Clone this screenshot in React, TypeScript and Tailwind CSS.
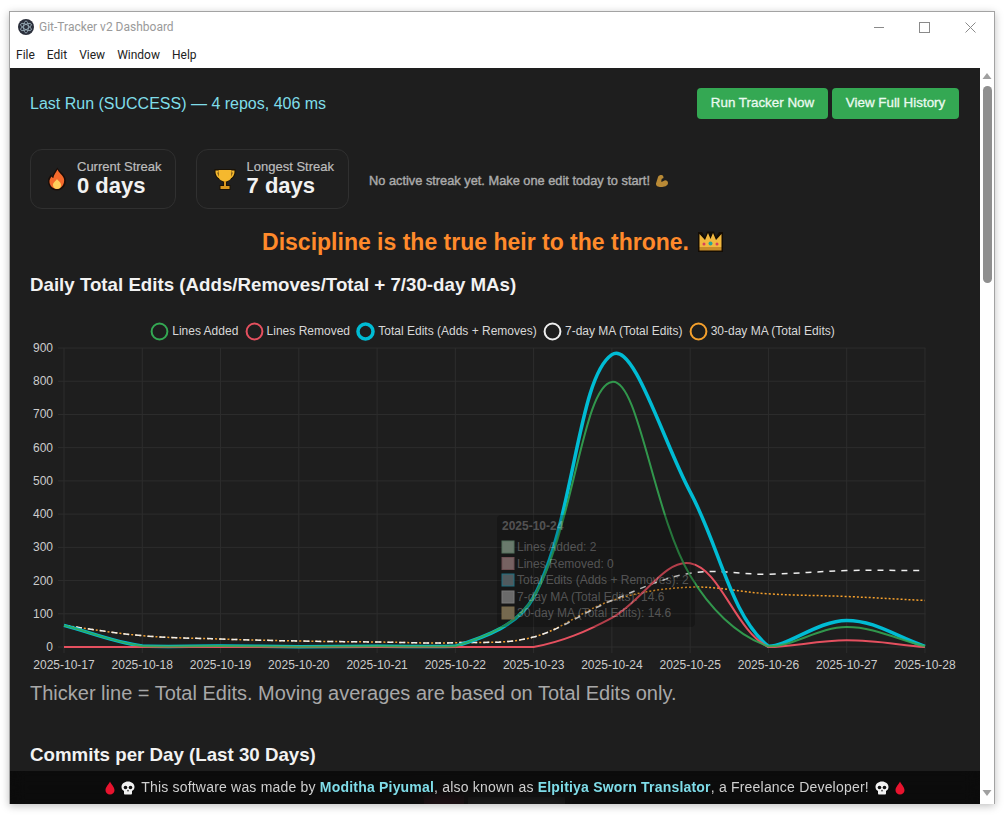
import React from "react";

const dates = ["2025-10-17","2025-10-18","2025-10-19","2025-10-20","2025-10-21","2025-10-22","2025-10-23","2025-10-24","2025-10-25","2025-10-26","2025-10-27","2025-10-28"];
const X = (i: number) => 64 + i * 78.27;
const Y = (v: number) => 647 - v * 0.3322;

function spline(data: number[], tension = 0.36) {
  const p = data.map((v, i) => [X(i), Y(v)]);
  let d = `M${p[0][0]} ${p[0][1]}`;
  const cps = p.map((c, i) => {
    const a = p[Math.max(i - 1, 0)];
    const b = p[Math.min(i + 1, p.length - 1)];
    const d01 = Math.hypot(c[0] - a[0], c[1] - a[1]);
    const d12 = Math.hypot(b[0] - c[0], b[1] - c[1]);
    const s = d01 + d12 || 1;
    const fa = (tension * d01) / s;
    const fb = (tension * d12) / s;
    return {
      prev: [c[0] - fa * (b[0] - a[0]), Math.min(647, c[1] - fa * (b[1] - a[1]))],
      next: [c[0] + fb * (b[0] - a[0]), Math.min(647, c[1] + fb * (b[1] - a[1]))],
    };
  });
  for (let i = 1; i < p.length; i++) {
    d += `C${cps[i - 1].next[0]} ${cps[i - 1].next[1]} ${cps[i].prev[0]} ${cps[i].prev[1]} ${p[i][0]} ${p[i][1]}`;
  }
  return d;
}

const added = [65, 3, 3, 1, 2, 2, 150, 798, 215, 2, 60, 2];
const removed = [0, 0, 0, 0, 0, 0, 0, 88, 252, 0, 20, 0];
const total = [65, 3, 3, 1, 2, 2, 150, 880, 467, 2, 80, 2];
const ma7 = [65, 34, 24, 18, 15, 13, 30, 140, 222, 219, 230, 230];
const ma30 = [65, 34, 24, 18, 15, 13, 30, 140, 180, 160, 152, 140];

const legend = [
  { label: "Lines Added", color: "#34a853", w: 2 },
  { label: "Lines Removed", color: "#e5505f", w: 2 },
  { label: "Total Edits (Adds + Removes)", color: "#00bcd4", w: 3.5 },
  { label: "7-day MA (Total Edits)", color: "#eeeeee", w: 2 },
  { label: "30-day MA (Total Edits)", color: "#f5a02c", w: 2 },
];

const tooltipRows = [
  { t: "Lines Added: 2", y: 547, fill: "#6a7a6c", stroke: "#54705c" },
  { t: "Lines Removed: 0", y: 563.5, fill: "#766262", stroke: "#6d4f52" },
  { t: "Total Edits (Adds + Removes): 2", y: 580, fill: "#505a5e", stroke: "#1f6f80" },
  { t: "7-day MA (Total Edits): 14.6", y: 597, fill: "#6a6a6a", stroke: "#7a7a7a" },
  { t: "30-day MA (Total Edits): 14.6", y: 613, fill: "#75694f", stroke: "#7a6a4a" },
];

function Flame() {
  return (
    <svg width="22" height="24" viewBox="0 0 22 24" className="shrink-0">
      <path d="M11.500 .5c.8 3 6.500 6 8 11C21 17.500 17 23.500 11 23.500S1.500 18.500 2 13c.3-2.500 2-4 3-5.500.5 1 1 1.500 1.500 2C7 6.500 9 4 11.500.5z" fill="#1a0d08" />
      <path d="M11.500 2.500c1 3 5.500 5.500 6.500 9.500 1 4.800-2.500 10-7 10S3 18 3.500 13.500C3.800 12 5 10.500 5.500 9.500c.5.800 1 1.300 1.800 1.500C7.800 8 9.800 5.500 11.500 2.500z" fill="#f56a2c" />
      <path d="M11 12c1 1.800 4 3 4 6s-2 4-4 4-4-1.500-4-4 3-4 4-6z" fill="#ffcf5c" />
    </svg>
  );
}

function Trophy() {
  return (
    <svg width="26" height="24" viewBox="0 0 26 24" className="shrink-0">
      <path d="M2.500 2h21v3c0 4-2.500 7-5.500 7.500-1 1.500-2.500 2.500-3 2.800V18h3.500v5h-11v-5H11v-2.700c-.5-.3-2-1.300-3-2.800C5 12 2.500 9 2.500 5z" fill="#1a1206" />
      <path d="M6.500 3h13v6c0 3.200-3 5.500-6.500 5.500S6.500 12.200 6.500 9z" fill="#f5b82e" />
      <path d="M3.500 3.500h3v2H5.500c.2 2.300 1.200 4 2 4.700l.5 1.300C5.500 11 3.500 8 3.500 4.500zM22.500 3.500h-3v2h1c-.2 2.300-1.200 4-2 4.700l-.5 1.300c2.500-.5 4.500-3.500 4.500-7z" fill="#f5b82e" />
      <rect x="12" y="14" width="2" height="5" fill="#d8971f" />
      <rect x="8.500" y="19" width="9" height="3" fill="#d8971f" />
    </svg>
  );
}

function Muscle() {
  return (
    <svg width="14" height="14" viewBox="0 0 14 14" className="shrink-0">
      <path d="M6.500 1C5 1 3.500 1.500 3 3c-.5 2-1.500 4.500-2 6.500C.7 12 3 13 6 13c3 0 7-1 7-4 0-2-2-3-3.500-2.500C8.500 6.800 7.500 7.500 6.500 8c-.5-1 0-2.500.5-3.500.5.300 1.500 0 1.500-1S8 1 6.500 1z" fill="#b98a36" />
    </svg>
  );
}

function Crown() {
  return (
    <svg width="25" height="22" viewBox="0 0 25 22" className="shrink-0">
      <path d="M0 1h4l3 5 2-5.500h7L18 6l3-5h4v20H0z" fill="#140d05" />
      <path d="M1.500 3l5.500 6 3-7 2.500 6 2.500-6 3 7 5.500-6v13h-22z" fill="#f2b83e" />
      <rect x="1.500" y="16" width="22" height="3.500" fill="#c98d28" />
      <circle cx="12.500" cy="12.500" r="2" fill="#2aa59a" />
      <circle cx="6" cy="13" r="1.500" fill="#d8405c" />
      <circle cx="19" cy="13" r="1.500" fill="#d8405c" />
    </svg>
  );
}

function Drop() {
  return (
    <svg width="10" height="14" viewBox="0 0 10 14" className="shrink-0">
      <path d="M5 .5C6 3 9.500 6 9.500 9.200 9.500 11.800 7.500 13.500 5 13.500S.5 11.800.5 9.200C.5 6 4 3 5 .5z" fill="#e8132e" />
    </svg>
  );
}

function Skull() {
  return (
    <svg width="14" height="14" viewBox="0 0 14 14" className="shrink-0">
      <path d="M7 .5c3.500 0 6.500 2.300 6.500 5.500 0 2-1 3.300-2.500 4v2.500c0 .5-.5 1-1 1H4c-.5 0-1-.5-1-1V10C1.500 9.300.5 8 .5 6 .5 2.800 3.500.5 7 .5z" fill="#f2f2f2" />
      <circle cx="4.500" cy="6.500" r="1.800" fill="#111" />
      <circle cx="9.500" cy="6.500" r="1.800" fill="#111" />
      <path d="M7 8.500l1 1.800H6z" fill="#111" />
    </svg>
  );
}

function StreakCard({ icon, label, value, className }: { icon: React.ReactNode; label: string; value: string; className: string }) {
  return (
    <div className={`flex h-[60px] items-center gap-[9px] rounded-xl border border-[#303030] bg-[#1f1f1f] pl-[15px] ${className}`}>
      {icon}
      <div className="flex flex-col pb-[2px]">
        <div className="text-[13px] leading-[16px] text-[#bdbdbd] [-webkit-text-stroke:0.2px]">{label}</div>
        <div className="text-[22px] font-bold leading-[22px] text-[#f2f2f2]">{value}</div>
      </div>
    </div>
  );
}

function Chart() {
  const grid = "#2d2d2d";
  const vals = [0, 100, 200, 300, 400, 500, 600, 700, 800, 900];
  return (
    <svg viewBox="30 341 929 334" className="block h-[334px] w-[929px]">
      {vals.map((v) => (
        <g key={v}>
          <line x1={58} x2={925.5} y1={Y(v)} y2={Y(v)} stroke={grid} />
          <text x={53} y={Y(v) + 4} textAnchor="end" fontSize={12} fill="#cccccc">{v}</text>
        </g>
      ))}
      {dates.map((d, i) => (
        <g key={d}>
          <line x1={X(i)} x2={X(i)} y1={348} y2={653} stroke={grid} />
          <text x={X(i)} y={669} textAnchor="middle" fontSize={12} fill="#cccccc">{d}</text>
        </g>
      ))}
      <path d={spline(ma30)} fill="none" stroke="#f5a02c" strokeWidth={1.5} strokeDasharray="2 2" />
      <path d={spline(ma7)} fill="none" stroke="#eeeeee" strokeWidth={1.5} strokeDasharray="6 6" />
      <path d={spline(total)} fill="none" stroke="#00bcd4" strokeWidth={3.5} />
      <path d={spline(removed)} fill="none" stroke="#e5505f" strokeWidth={2} />
      <path d={spline(added)} fill="none" stroke="#34a853" strokeWidth={2} opacity={0.88} />
      <g>
        <rect x={497} y={515} width={198} height={112} rx={4} fill="#000" fillOpacity={0.22} />
        <text x={502} y={530} fontSize={12} fontWeight={700} fill="#fff" fillOpacity={0.27}>2025-10-24</text>
        {tooltipRows.map((r) => (
          <g key={r.t}>
            <rect x={502} y={r.y - 6} width={12} height={12} fill={r.fill} stroke={r.stroke} />
            <text x={517} y={r.y + 4} fontSize={12} fill="#fff" fillOpacity={0.27}>{r.t}</text>
          </g>
        ))}
      </g>
    </svg>
  );
}

export default function App() {
  return (
    <div className="h-[816px] w-[1005px] overflow-hidden bg-white pl-[9px] pt-[11px] font-['Liberation_Sans',Arial,sans-serif]">
      <div className="flex h-[793px] w-[986px] flex-col border border-b-0 border-[#a3a3a3] bg-white shadow-[0_2px_8px_rgba(0,0,0,0.25)]">
        <div className="flex h-[30px] shrink-0 items-center pl-[8px] pr-[18px]">
          <svg width="16" height="16" viewBox="0 0 16 16" className="mr-[5px] shrink-0">
            <circle cx="8" cy="8" r="8" fill="#2b2f3b" />
            <g fill="none" stroke="#9fb4bf" strokeWidth="0.8">
              <ellipse cx="8" cy="8" rx="6" ry="2.400" transform="rotate(30 8 8)" />
              <ellipse cx="8" cy="8" rx="6" ry="2.400" transform="rotate(-30 8 8)" />
              <ellipse cx="8" cy="8" rx="6" ry="2.400" transform="rotate(90 8 8)" />
            </g>
          </svg>
          <span className="font-['Roboto',sans-serif] text-[12px] text-[#9a9a9a]">Git-Tracker v2 Dashboard</span>
          <div className="ml-auto flex items-center gap-[35px]">
            <svg width="10" height="10" viewBox="0 0 10 10"><line x1="0" x2="10" y1="5.500" y2="5.500" stroke="#8a8a8a" /></svg>
            <svg width="11" height="11" viewBox="0 0 11 11"><rect x="0.500" y="0.500" width="10" height="10" fill="none" stroke="#8a8a8a" /></svg>
            <svg width="11" height="11" viewBox="0 0 11 11"><path d="M.5.500l10 10M10.500.500l-10 10" stroke="#8a8a8a" fill="none" /></svg>
          </div>
        </div>
        <div className="flex h-[26px] shrink-0 items-center gap-[12px] pl-[6px] font-['Roboto',sans-serif] text-[12px] text-[#222222]">
          <span>File</span>
          <span>Edit</span>
          <span>View</span>
          <span>Window</span>
          <span>Help</span>
        </div>
        <div className="flex min-h-0 flex-1">
          <div className="relative w-[970px] shrink-0 overflow-hidden bg-[#1e1e1e] pl-[20px] pr-[21px] pt-[20px]">
            <div className="flex h-[31px] items-center justify-between">
              <div className="text-[16px] text-[#7fdde9]">Last Run (SUCCESS) — 4 repos, 406 ms</div>
              <div className="flex gap-[4px]">
                <button className="h-[31px] w-[131px] rounded-[4px] bg-[#34a853] text-[13.4px] text-[#eafaf0] [-webkit-text-stroke:0.3px]">Run Tracker Now</button>
                <button className="h-[31px] w-[127px] rounded-[4px] bg-[#34a853] text-[13.4px] text-[#eafaf0] [-webkit-text-stroke:0.3px]">View Full History</button>
              </div>
            </div>
            <div className="mt-[30px] flex items-center gap-[20px]">
              <StreakCard icon={<Flame />} label="Current Streak" value="0 days" className="pr-[13px]" />
              <StreakCard icon={<Trophy />} label="Longest Streak" value="7 days" className="pr-[14px]" />
              <div className="flex items-center gap-[5px] pt-[3px] text-[12.8px] text-[#ababab] [-webkit-text-stroke:0.4px]">
                <span>No active streak yet. Make one edit today to start!</span>
                <Muscle />
              </div>
            </div>
            <div className="mt-[20px] flex h-[26px] items-center justify-center gap-[9px] pr-[4px] text-[23px] font-bold text-[#ff8a2b]">
              <span>Discipline is the true heir to the throne.</span>
              <Crown />
            </div>
            <h2 className="mt-[19px] text-[18.72px] font-bold leading-[22px] text-[#f2f2f2]">Daily Total Edits (Adds/Removes/Total + 7/30-day MAs)</h2>
            <div className="mt-[25px] flex h-[20px] items-center justify-center gap-[6.3px] pr-[4px] text-[12px] text-[#d8d8d8]">
              {legend.map((l) => (
                <div key={l.label} className="flex items-center gap-[3px]">
                  <svg width="19" height="19" viewBox="0 0 19 19" className="shrink-0">
                    <circle cx="9.500" cy="9.500" r={8.4 - l.w / 4} fill="none" stroke={l.color} strokeWidth={l.w} />
                  </svg>
                  <span>{l.label}</span>
                </div>
              ))}
            </div>
            <Chart />
            <p className="mt-[6px] text-[20px] leading-[24px] text-[#a8a8a8]">Thicker line = Total Edits. Moving averages are based on Total Edits only.</p>
            <h2 className="mt-[39px] text-[18.72px] font-bold leading-[22px] text-[#f2f2f2]">Commits per Day (Last 30 Days)</h2>
            <div className="mt-[29px] flex h-[12px] items-center justify-center gap-[4px]">
              <span className="h-[12px] w-[40px] bg-[#e5507f]" />
              <span className="h-[8px] w-[97px] bg-[#d4d4d4]" />
            </div>
            <div className="absolute inset-x-0 bottom-0 flex h-[33px] items-center justify-center gap-[6px] bg-[#0a0a0a]/90 pl-[20px] text-[14px] tracking-[0.2px] text-[#cfcfcf] backdrop-blur-sm">
              <Drop />
              <Skull />
              <span>
                This software was made by <b className="text-[#7fdde9]">Moditha Piyumal</b>, also known as <b className="text-[#7fdde9]">Elpitiya Sworn Translator</b>, a Freelance Developer!
              </span>
              <Skull />
              <Drop />
            </div>
          </div>
          <div className="flex w-[14px] shrink-0 flex-col items-center bg-white">
            <svg width="10" height="6" viewBox="0 0 10 6" className="mt-[5px] shrink-0"><path d="M5 0l4.500 6H.5z" fill="#a0a0a0" /></svg>
            <div className="mt-[7px] h-[197px] w-[9px] rounded-full bg-[#8f8f8f]" />
            <svg width="10" height="6" viewBox="0 0 10 6" className="mb-[8px] mt-auto shrink-0"><path d="M5 6L.5 0h9z" fill="#a0a0a0" /></svg>
          </div>
        </div>
      </div>
    </div>
  );
}
